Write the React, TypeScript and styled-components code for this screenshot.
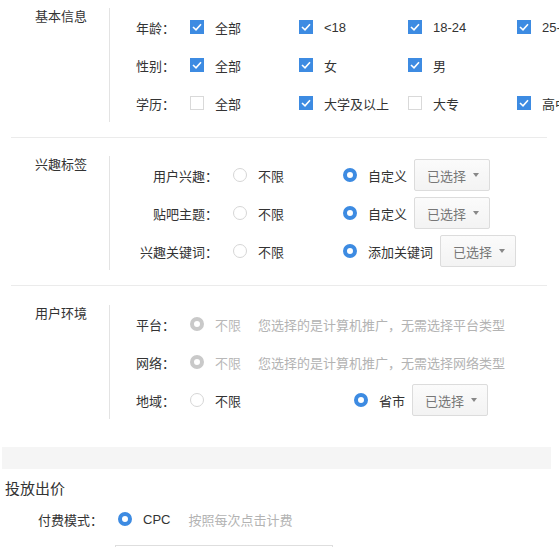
import React from "react";
import styled, { createGlobalStyle } from "styled-components";

const Global = createGlobalStyle`
  html, body { margin: 0; padding: 0; background: #fff; overflow: hidden; }
  body {
    font-family: "Liberation Sans", "Noto Sans CJK SC", sans-serif;
    font-size: 13px;
    color: #333;
  }
`;

const BLUE = "#3d8be2";

const Page = styled.div`
  width: 559px;
  height: 547px;
  overflow: hidden;
`;

const Section = styled.section<{ $top: number; $line: boolean }>`
  display: grid;
  grid-template-columns: 98px auto;
  margin: 0 12px 0 11px;
  padding: ${(p) => p.$top}px 0 15px;
  border-bottom: ${(p) => (p.$line ? "1px solid #ebebeb" : "none")};
`;

const SectionTitle = styled.div`
  padding-left: 24px;
  line-height: 18px;
  font-size: 13px;
  color: #333;
  white-space: nowrap;
`;

const SectionBody = styled.div`
  border-left: 1px solid #e3e3e3;
  padding-left: 26px;
  white-space: nowrap;
`;

const Row = styled.div`
  display: flex;
  align-items: center;
  height: 38px;
`;

const RowLabel = styled.span<{ $w: number; $right?: boolean }>`
  flex: none;
  width: ${(p) => p.$w}px;
  text-align: ${(p) => (p.$right ? "right" : "left")};
  margin-right: ${(p) => (p.$right ? 15 : 0)}px;
  color: #333;
`;

const Option = styled.label<{ $w?: number; $muted?: boolean }>`
  flex: none;
  display: flex;
  align-items: center;
  gap: 11px;
  width: ${(p) => (p.$w ? `${p.$w}px` : "auto")};
  color: ${(p) => (p.$muted ? "#b8b8b8" : "#333")};
`;

const Box = styled.span<{ $on: boolean }>`
  flex: none;
  width: 14px;
  height: 14px;
  box-sizing: border-box;
  border: 1px solid ${(p) => (p.$on ? BLUE : "#d9d9d9")};
  background: ${(p) => (p.$on ? BLUE : "#fff")};
  display: flex;
  align-items: center;
  justify-content: center;
`;

const Circle = styled.span<{ $on: boolean; $disabled?: boolean }>`
  flex: none;
  width: 14px;
  height: 14px;
  box-sizing: border-box;
  border-radius: 50%;
  background: #fff;
  border: ${(p) =>
    p.$on ? `4px solid ${p.$disabled ? "#c9c9c9" : BLUE}` : "1px solid #d6d6d6"};
`;

const Hint = styled.span<{ $gap?: number }>`
  color: #b3b3b3;
  margin-left: ${(p) => p.$gap ?? 0}px;
`;

const DropButton = styled.button`
  flex: none;
  margin-left: 7px;
  height: 32px;
  box-sizing: border-box;
  padding: 0 10px 0 12px;
  display: flex;
  align-items: center;
  gap: 7px;
  border: 1px solid #dcdcdc;
  border-radius: 2px;
  background: linear-gradient(#fbfbfb, #f3f3f3);
  font: inherit;
  font-size: 13px;
  color: #777;
`;

const Caret = styled.span`
  width: 0;
  height: 0;
  border-left: 3.5px solid transparent;
  border-right: 3.5px solid transparent;
  border-top: 4px solid #888;
`;

const Band = styled.div`
  height: 22px;
  margin: 13px 8px 0 2px;
  background: #f5f5f5;
`;

const BlockTitle = styled.div`
  margin-top: 9px;
  padding-left: 5px;
  font-size: 15px;
  line-height: 22px;
  color: #333;
`;

const PayRow = styled.div`
  display: flex;
  align-items: center;
  height: 30px;
  margin-top: 4px;
  padding-left: 38px;
  gap: 11px;
`;

const PayLabel = styled.span`
  margin-right: 4px;
`;

const Input = styled.div`
  margin: 11px 0 0 115px;
  width: 218px;
  height: 30px;
  border: 1px solid #dedede;
  box-sizing: border-box;
`;

const Check = () => (
  <svg width="10" height="8" viewBox="0 0 10 8">
    <path d="M1 4 L4 6.8 L9 1.2" fill="none" stroke="#fff" strokeWidth="1.6" />
  </svg>
);

const CheckItem = ({ on, text, w = 109 }: { on: boolean; text: string; w?: number }) => (
  <Option $w={w}>
    <Box $on={on}>{on && <Check />}</Box>
    {text}
  </Option>
);

const RadioItem = ({
  on,
  text,
  w,
  disabled,
}: {
  on: boolean;
  text: string;
  w?: number;
  disabled?: boolean;
}) => (
  <Option $w={w} $muted={disabled}>
    <Circle $on={on} $disabled={disabled} />
    {text}
  </Option>
);

const Dropdown = () => (
  <DropButton>
    已选择
    <Caret />
  </DropButton>
);

export default function App() {
  return (
    <Page>
      <Global />
      <Section $top={8} $line>
        <SectionTitle>基本信息</SectionTitle>
        <SectionBody>
          <Row>
            <RowLabel $w={54}>年龄：</RowLabel>
            <CheckItem on text="全部" />
            <CheckItem on text="<18" />
            <CheckItem on text="18-24" />
            <CheckItem on text="25-34" />
          </Row>
          <Row>
            <RowLabel $w={54}>性别：</RowLabel>
            <CheckItem on text="全部" />
            <CheckItem on text="女" />
            <CheckItem on text="男" />
          </Row>
          <Row>
            <RowLabel $w={54}>学历：</RowLabel>
            <CheckItem on={false} text="全部" />
            <CheckItem on text="大学及以上" />
            <CheckItem on={false} text="大专" />
            <CheckItem on text="高中及以下" />
          </Row>
        </SectionBody>
      </Section>

      <Section $top={18} $line>
        <SectionTitle>兴趣标签</SectionTitle>
        <SectionBody>
          <Row>
            <RowLabel $w={82} $right>用户兴趣：</RowLabel>
            <RadioItem on={false} text="不限" w={110} />
            <RadioItem on text="自定义" />
            <Dropdown />
          </Row>
          <Row>
            <RowLabel $w={82} $right>贴吧主题：</RowLabel>
            <RadioItem on={false} text="不限" w={110} />
            <RadioItem on text="自定义" />
            <Dropdown />
          </Row>
          <Row>
            <RowLabel $w={82} $right>兴趣关键词：</RowLabel>
            <RadioItem on={false} text="不限" w={110} />
            <RadioItem on text="添加关键词" />
            <Dropdown />
          </Row>
        </SectionBody>
      </Section>

      <Section $top={19} $line={false}>
        <SectionTitle>用户环境</SectionTitle>
        <SectionBody>
          <Row>
            <RowLabel $w={54}>平台：</RowLabel>
            <RadioItem on disabled text="不限" w={68} />
            <Hint>您选择的是计算机推广，无需选择平台类型</Hint>
          </Row>
          <Row>
            <RowLabel $w={54}>网络：</RowLabel>
            <RadioItem on disabled text="不限" w={68} />
            <Hint>您选择的是计算机推广，无需选择网络类型</Hint>
          </Row>
          <Row>
            <RowLabel $w={54}>地域：</RowLabel>
            <RadioItem on={false} text="不限" w={164} />
            <RadioItem on text="省市" />
            <Dropdown />
          </Row>
        </SectionBody>
      </Section>

      <Band />
      <BlockTitle>投放出价</BlockTitle>
      <PayRow>
        <PayLabel>付费模式：</PayLabel>
        <Circle $on />
        <span>CPC</span>
        <Hint $gap={7}>按照每次点击计费</Hint>
      </PayRow>
      <Input />
    </Page>
  );
}
